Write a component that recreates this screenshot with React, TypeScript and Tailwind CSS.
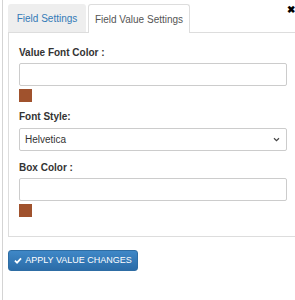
import React from "react";

export default function App() {
  const font = { fontFamily: '"Liberation Sans", Arial, sans-serif' };
  return (
    <div className="relative h-[300px] w-[295px] overflow-hidden bg-white" style={font}>
      <div className="absolute left-[2px] top-0 h-full w-px bg-[#d4d4d4]" />
      <span className="absolute right-0 top-[5px] text-[10px] font-bold leading-none text-black">✖</span>
      <div className="pl-[8px] pt-[4px]">
        <div className="flex items-end">
          <div className="mr-[2px] flex h-[28px] w-[78px] items-center justify-center rounded-t-[3px] bg-[#eeeeee] text-[10px] text-[#337ab7]">
            Field Settings
          </div>
          <div className="relative -mb-px flex h-[29px] w-[102px] items-center justify-center rounded-t-[3px] border border-b-0 border-[#dddddd] bg-white text-[10px] text-[#555555]">
            Field Value Settings
          </div>
        </div>
        <div className="w-[300px] border border-[#dddddd] pb-[19px] pl-[10px] pr-[23px] pt-[13px]">
          <div className="text-[10px] font-bold leading-[14px] text-[#333]">Value Font Color :</div>
          <div className="mt-[3px] h-[23px] w-[268px] rounded-[2px] border border-[#cccccc] bg-white" />
          <div className="mt-[3px] h-[13px] w-[13px] bg-[#a0522d]" />
          <div className="mt-[8px] text-[10px] font-bold leading-[14px] text-[#333]">Font Style:</div>
          <div className="mt-[4px] flex h-[23px] w-[268px] items-center justify-between rounded-[2px] border border-[#cccccc] bg-white pl-[5px] pr-[6px] text-[10px] text-[#333]">
            <span>Helvetica</span>
            <svg width="7" height="5" viewBox="0 0 8 6">
              <path d="M1 1.5 L4 4.5 L7 1.5" fill="none" stroke="#444" strokeWidth="1.4" />
            </svg>
          </div>
          <div className="mt-[10px] text-[10px] font-bold leading-[14px] text-[#333]">Box Color :</div>
          <div className="mt-[3px] h-[23px] w-[268px] rounded-[2px] border border-[#cccccc] bg-white" />
          <div className="mt-[3px] h-[13px] w-[13px] bg-[#a0522d]" />
        </div>
        <button className="mt-[13px] flex h-[21px] w-[130px] items-center justify-center gap-[3px] whitespace-nowrap rounded-[3px] border border-[#2e6da4] bg-gradient-to-b from-[#3f88c7] to-[#2b6ca8] text-[9px] text-white">
          <svg width="8" height="7" viewBox="0 0 9 8">
            <path d="M1 4.2 L3.4 6.5 L8 1.5" fill="none" stroke="white" strokeWidth="2" />
          </svg>
          APPLY VALUE CHANGES
        </button>
      </div>
    </div>
  );
}
